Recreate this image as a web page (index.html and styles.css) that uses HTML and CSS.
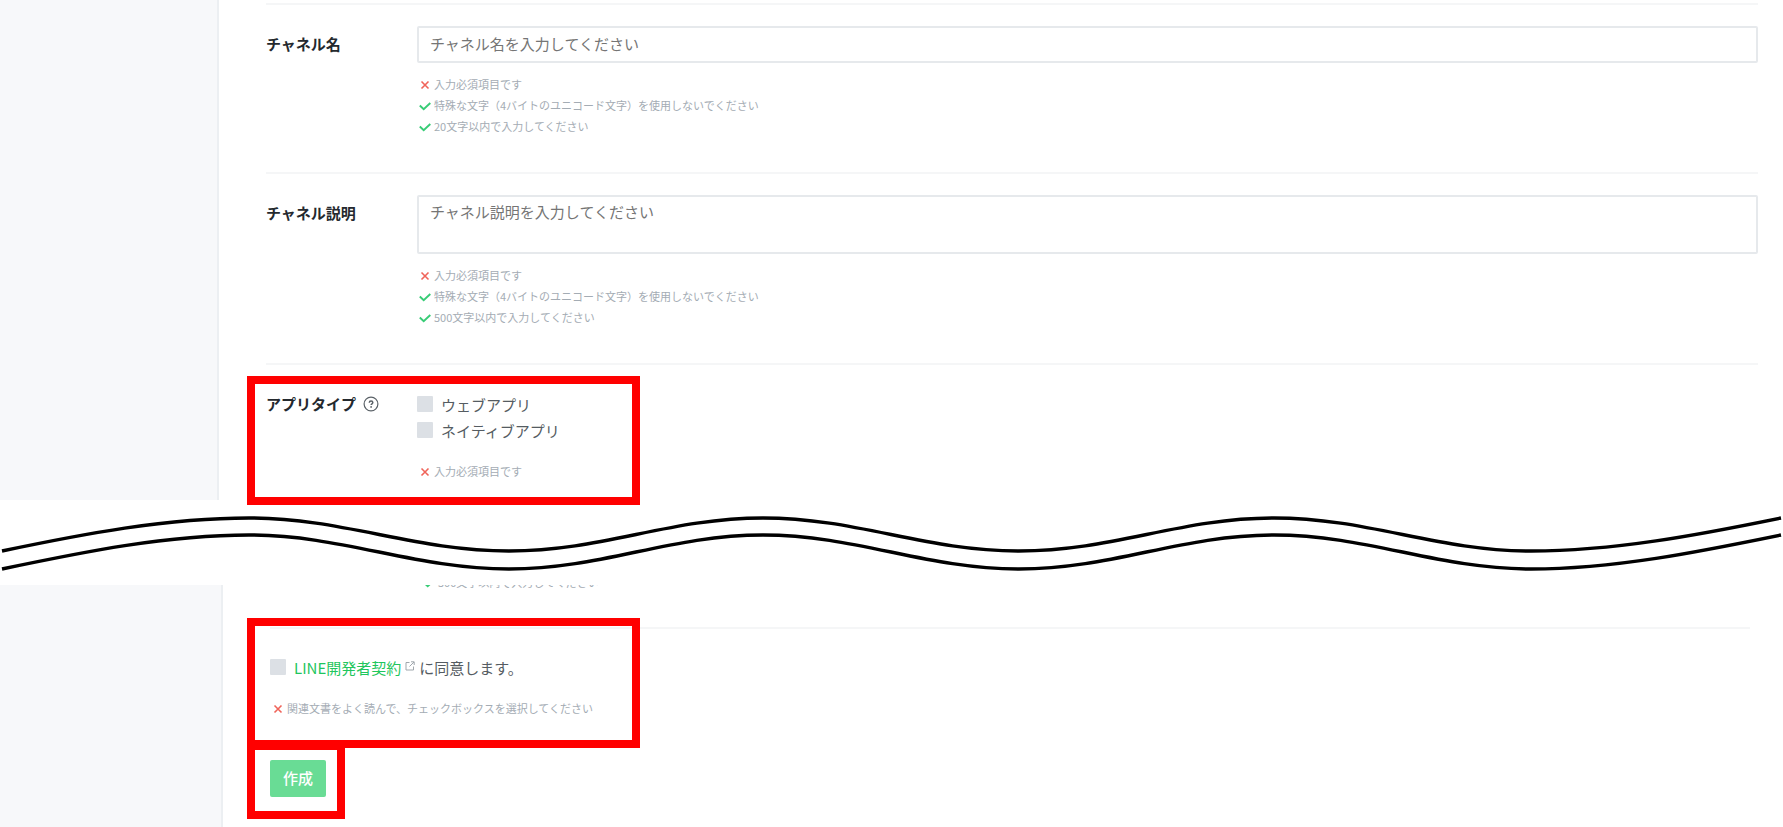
FILE: index.html
```html
<!DOCTYPE html>
<html lang="ja">
<head>
<meta charset="utf-8">
<title>チャネル作成</title>
<link rel="stylesheet" href="styles.css">
</head>
<body>
<svg class="sprite" aria-hidden="true">
  <symbol id="cross" viewBox="0 0 12 12"><path d="M2.500 2.500l7 7M9.500 2.500l-7 7" fill="none" stroke="#f0645a" stroke-width="1.600"/></symbol>
  <symbol id="check" viewBox="0 0 12 12"><path d="M.8 5.500l3.900 3.800L11.300 3" fill="none" stroke="#38cc76" stroke-width="1.900"/></symbol>
</svg>
<form>
  <div class="pane">
    <aside class="side"></aside>
    <main class="main">
      <section class="field">
        <label class="name" for="channel-name">チャネル名</label>
        <div>
          <input class="box" id="channel-name" type="text" placeholder="チャネル名を入力してください">
          <ul class="hints">
            <li><svg class="mark"><use href="#cross"/></svg>入力必須項目です</li>
            <li><svg class="mark"><use href="#check"/></svg>特殊な文字（4バイトのユニコード文字）を使用しないでください</li>
            <li><svg class="mark"><use href="#check"/></svg>20文字以内で入力してください</li>
          </ul>
        </div>
      </section>
      <section class="field">
        <label class="name" for="channel-desc">チャネル説明</label>
        <div>
          <textarea class="box area" id="channel-desc" placeholder="チャネル説明を入力してください"></textarea>
          <ul class="hints">
            <li><svg class="mark"><use href="#cross"/></svg>入力必須項目です</li>
            <li><svg class="mark"><use href="#check"/></svg>特殊な文字（4バイトのユニコード文字）を使用しないでください</li>
            <li><svg class="mark"><use href="#check"/></svg>500文字以内で入力してください</li>
          </ul>
        </div>
      </section>
      <section class="field last">
        <div class="name">アプリタイプ
          <svg class="help" viewBox="0 0 16 16"><circle cx="8" cy="8" r="6.900" fill="none" stroke="#5a6167" stroke-width="1.200"/><path d="M6.300 6.700c0-2.200 3.500-2.100 3.500-.1 0 1.200-1.700 1.200-1.700 2.500" fill="none" stroke="#5a6167" stroke-width="1.500"/><circle cx="8.100" cy="10.900" r=".9" fill="#5a6167"/></svg>
        </div>
        <div class="types">
          <label class="option"><input class="tick" type="checkbox">ウェブアプリ</label>
          <label class="option"><input class="tick" type="checkbox">ネイティブアプリ</label>
          <ul class="hints wide">
            <li><svg class="mark"><use href="#cross"/></svg>入力必須項目です</li>
          </ul>
        </div>
        <div class="frame frame-type"></div>
      </section>
    </main>
  </div>

  <svg class="wave" viewBox="0 0 1783 85" preserveAspectRatio="none" aria-hidden="true">
    <g fill="none" stroke="#000" stroke-width="3.400">
      <path d="M2 51C83 34 166 18 249 18C343 18 415 51 509 51C603 51 669 18 763 18C857 18 925 51 1019 51C1113 51 1180 18 1274 18C1368 18 1437 51 1531 51C1614 51 1698 35 1781 18"/>
      <path d="M2 69C83 52 166 35 249 35C343 35 415 69 509 69C603 69 669 35 763 35C857 35 925 69 1019 69C1113 69 1180 35 1274 35C1368 35 1437 69 1531 69C1614 69 1698 52 1781 35"/>
    </g>
  </svg>

  <div class="pane">
    <aside class="side side-lower"></aside>
    <div class="main main-lower">
      <div class="cut">
        <ul class="hints">
          <li><svg class="mark"><use href="#check"/></svg>500文字以内で入力してください</li>
        </ul>
      </div>
      <section class="agree">
        <div class="option">
          <input class="tick" id="agree" type="checkbox">
          <label for="agree"><a class="link" href="#">LINE開発者契約</a><svg class="ext" viewBox="0 0 10 10"><path d="M4.500 1.500H1v7.500h7.500V5.500M6 .8h3.200V4M9 1L4.500 5.500" fill="none" stroke="#a0a7ad" stroke-width="1"/></svg>に同意します。</label>
        </div>
        <ul class="hints wide">
          <li><svg class="mark"><use href="#cross"/></svg>関連文書をよく読んで、チェックボックスを選択してください</li>
        </ul>
        <button class="create" type="button">作成</button>
        <div class="frame frame-agree"></div>
        <div class="frame frame-create"></div>
      </section>
    </div>
  </div>
</form>
</body>
</html>
```

FILE: styles.css
```css
* {
  box-sizing: border-box;
}

body {
  margin: 0;
  background: #fff;
  color: #555c62;
  font-family: "Noto Sans CJK JP", sans-serif;
  font-size: 15px;
  line-height: 24px;
}

.sprite {
  display: none;
}

.pane {
  display: flex;
}

.side {
  flex: 0 0 219px;
  background: #f7f8fa;
  border-right: 2px solid #eceff2;
}

.side-lower {
  flex-basis: 223px;
}

.main {
  flex: 1;
  min-width: 0;
  padding: 3px 25px 0 47px;
}

.main-lower {
  padding: 0 33px 30px 47px;
}

.field {
  position: relative;
  display: grid;
  grid-template-columns: 151px 1fr;
  padding: 21px 0 35px;
  border-top: 2px solid #f5f6f7;
}

.field.last {
  padding-bottom: 18px;
}

.name {
  display: flex;
  align-items: center;
  gap: 7px;
  height: 35px;
  color: #24292e;
  font-weight: 700;
}

.help {
  width: 16px;
  height: 16px;
}

.box {
  display: block;
  width: 100%;
  height: 37px;
  padding: 0 11px 2px;
  border: 2px solid #e6e9ec;
  border-radius: 2px;
  background: #fff;
  color: #24292e;
  font: inherit;
}

.area {
  height: 59px;
  padding: 3px 11px;
  resize: none;
}

.box::placeholder {
  color: #757575;
}

.hints {
  margin: 11px 0 0;
  padding: 0 0 0 2px;
  list-style: none;
  color: #a4acb4;
  font-size: 11px;
  line-height: 21px;
}

.hints.wide {
  margin-top: 16px;
}

.hints li {
  display: flex;
  align-items: center;
  gap: 3px;
}

.mark {
  width: 12px;
  height: 12px;
}

.types {
  padding-top: 7px;
}

.option {
  display: flex;
  gap: 8px;
  height: 26px;
}

.tick {
  appearance: none;
  width: 16px;
  height: 16px;
  margin: 3px 0 0;
  border-radius: 1px;
  background: #dce0e5;
}

.wave {
  display: block;
  width: 100%;
  height: 85px;
}

.cut {
  height: 8px;
  padding-left: 151px;
  overflow: hidden;
}

.cut .hints {
  margin-top: -13px;
}

.agree {
  position: relative;
  margin-top: 34px;
  padding-top: 27px;
  border-top: 2px solid #f5f6f7;
}

.link {
  color: #1fc65d;
  text-decoration: none;
}

.ext {
  width: 10px;
  height: 10px;
  margin: 0 4px;
  vertical-align: 3px;
}

.create {
  display: block;
  height: 37px;
  margin-top: 41px;
  padding: 0 13px 2px;
  border: 0;
  border-radius: 2px;
  background: #69dc95;
  color: #fff;
  font: inherit;
  font-weight: 500;
}

.frame {
  position: absolute;
  left: -19px;
  width: 393px;
  border: 8px solid #f00;
  pointer-events: none;
}

.frame-type {
  top: 11px;
  height: 129px;
}

.frame-agree {
  left: -23px;
  top: -11px;
  height: 130px;
}

.frame-create {
  left: -23px;
  top: 113px;
  width: 98px;
  height: 77px;
}
```
